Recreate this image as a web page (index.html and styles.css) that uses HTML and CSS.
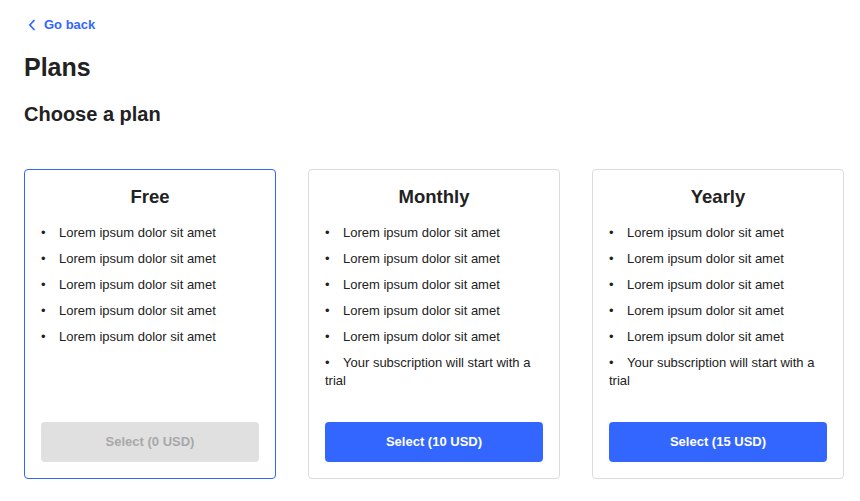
FILE: index.html
```html
<!DOCTYPE html>
<html>
<head>
<meta charset="utf-8">
<link rel="stylesheet" href="styles.css">
</head>
<body>
<div class="page">
  <a class="back" href="#">
    <svg class="chev" width="8" height="12" viewBox="0 0 8 12"><path d="M6 1.5 L1.8 6 L6 10.5" fill="none" stroke="#3366ff" stroke-width="1.8" stroke-linecap="round" stroke-linejoin="round"/></svg>
    <span>Go back</span>
  </a>
  <h1 class="title">Plans</h1>
  <h2 class="subtitle">Choose a plan</h2>
  <div class="plans">
    <div class="card selected">
      <h3 class="card-title">Free</h3>
      <ul class="features">
        <li>Lorem ipsum dolor sit amet</li>
        <li>Lorem ipsum dolor sit amet</li>
        <li>Lorem ipsum dolor sit amet</li>
        <li>Lorem ipsum dolor sit amet</li>
        <li>Lorem ipsum dolor sit amet</li>
      </ul>
      <button class="btn disabled" disabled>Select (0 USD)</button>
    </div>
    <div class="card">
      <h3 class="card-title">Monthly</h3>
      <ul class="features">
        <li>Lorem ipsum dolor sit amet</li>
        <li>Lorem ipsum dolor sit amet</li>
        <li>Lorem ipsum dolor sit amet</li>
        <li>Lorem ipsum dolor sit amet</li>
        <li>Lorem ipsum dolor sit amet</li>
        <li>Your subscription will start with a trial</li>
      </ul>
      <button class="btn">Select (10 USD)</button>
    </div>
    <div class="card">
      <h3 class="card-title">Yearly</h3>
      <ul class="features">
        <li>Lorem ipsum dolor sit amet</li>
        <li>Lorem ipsum dolor sit amet</li>
        <li>Lorem ipsum dolor sit amet</li>
        <li>Lorem ipsum dolor sit amet</li>
        <li>Lorem ipsum dolor sit amet</li>
        <li>Your subscription will start with a trial</li>
      </ul>
      <button class="btn">Select (15 USD)</button>
    </div>
  </div>
</div>
</body>
</html>
```
FILE: styles.css
```css
* { box-sizing: border-box; }
html, body { margin: 0; padding: 0; background: #fff; }
body {
  font-family: "Liberation Sans", Arial, sans-serif;
  color: #222;
}
.page {
  padding: 17px 16px 0 24px;
}
.back {
  display: flex;
  align-items: center;
  gap: 8px;
  height: 16px;
  padding-left: 4px;
  color: #3366ff;
  text-decoration: none;
  font-weight: bold;
  font-size: 13px;
  line-height: 16px;
}
.chev { display: block; }
.title {
  margin: 19px 0 0;
  font-size: 25px;
  line-height: 30px;
  font-weight: bold;
}
.subtitle {
  margin: 20px 0 0;
  font-size: 20px;
  line-height: 24px;
  font-weight: bold;
}
.plans {
  margin-top: 43px;
  display: grid;
  grid-template-columns: repeat(3, 252px);
  gap: 32px;
}
.card {
  display: flex;
  flex-direction: column;
  border: 1px solid #dcdcdc;
  border-radius: 4px;
  padding: 15px 16px 16px;
  height: 310px;
}
.card.selected { border-color: #3366ff; }
.card-title {
  margin: 0;
  text-align: center;
  font-size: 18.5px;
  line-height: 23px;
  font-weight: bold;
}
.features {
  list-style: none;
  margin: 16px 0 0;
  padding: 0;
  font-size: 13px;
  line-height: 18px;
}
.features li {
  margin-bottom: 8px;
}
.features li::before {
  content: "•";
  display: inline-block;
  width: 18px;
}
.btn {
  margin-top: auto;
  height: 40px;
  width: 100%;
  border: none;
  border-radius: 4px;
  background: #3366ff;
  color: #fff;
  font-family: "Liberation Sans", Arial, sans-serif;
  font-size: 13px;
  line-height: 15px;
  padding: 0 0 1px;
  font-weight: bold;
  cursor: pointer;
}
.btn.disabled {
  background: #e0e0e0;
  color: #a8a8a8;
  cursor: default;
}
```
